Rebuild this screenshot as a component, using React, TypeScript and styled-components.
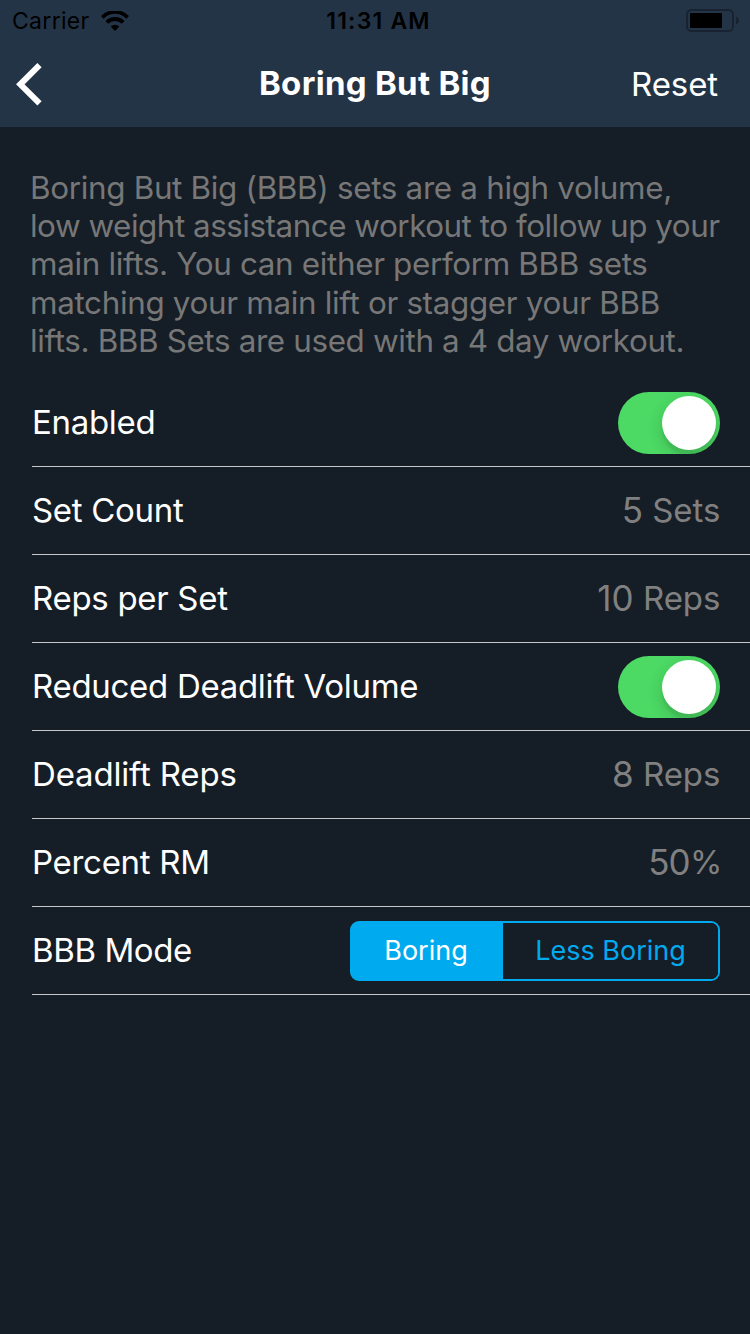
import React, { useState } from "react";
import styled, { createGlobalStyle } from "styled-components";

const GlobalStyle = createGlobalStyle`
  * { box-sizing: border-box; }
  body {
    margin: 0;
    background: #151d26;
    color: #ffffff;
    font-family: Inter, "Liberation Sans", sans-serif;
  }
  button { font: inherit; color: inherit; border: 0; padding: 0; background: none; cursor: pointer; }
`;

const Screen = styled.main`
  width: 750px;
  height: 1334px;
  overflow: hidden;
  background: #151d26;
`;

const Header = styled.header`
  height: 127px;
  background: #243447;
`;

const StatusBar = styled.div`
  display: grid;
  grid-template-columns: 1fr auto 1fr;
  align-items: center;
  height: 41px;
  padding: 0 11px 0 12px;
  color: #000000;
`;

const Carrier = styled.div`
  display: flex;
  align-items: center;
  gap: 11px;
  padding-top: 1px;
  font-size: 23px;
  line-height: 40px;
  letter-spacing: 0.3px;
`;

const Clock = styled.div`
  padding: 1px 0 0 6px;
  font-size: 23px;
  font-weight: 600;
  line-height: 40px;
  letter-spacing: 1.2px;
`;

const BatteryIcon = styled.svg`
  justify-self: end;
`;

const NavBar = styled.nav`
  display: grid;
  grid-template-columns: 1fr auto 1fr;
  align-items: center;
  height: 86px;
`;

const BackButton = styled.button`
  display: flex;
  justify-self: start;
  margin-left: 16px;
`;

const Title = styled.h1`
  margin: 0;
  padding-bottom: 3px;
  font-size: 33px;
  font-weight: 700;
  line-height: 40px;
  letter-spacing: 0.3px;
`;

const ResetButton = styled.button`
  justify-self: end;
  margin-right: 32px;
  padding-bottom: 1px;
  font-size: 33px;
  line-height: 40px;
  letter-spacing: -0.1px;
`;

const Description = styled.p`
  margin: 0;
  padding: 42px 0 19px 30px;
  color: #777777;
  font-size: 31.4px;
  line-height: 38.2px;
  white-space: nowrap;
`;

const DescriptionLine = styled.span<{ $tracking: number }>`
  display: block;
  letter-spacing: ${({ $tracking }) => $tracking}px;
`;

const Row = styled.div`
  display: flex;
  align-items: center;
  justify-content: space-between;
  height: 88px;
  margin-left: 32px;
  padding-right: 30px;
  border-bottom: 1px solid #c8c7cc;
`;

const Label = styled.span<{ $tracking?: number }>`
  padding-bottom: 2px;
  font-size: 33px;
  line-height: 40px;
  letter-spacing: ${({ $tracking = -0.3 }) => $tracking}px;
`;

const Value = styled.span`
  display: flex;
  align-items: center;
  margin-right: -0.5px;
  padding-bottom: 1px;
  color: #808080;
  font-size: 33px;
  line-height: 40px;
  white-space: pre;
`;

const Amount = styled.span`
  font-size: 35px;
`;

const Percentage = styled(Value)`
  margin-right: -1.5px;
  letter-spacing: -0.8px;
`;

const Switch = styled.button<{ $on: boolean }>`
  display: flex;
  justify-content: ${({ $on }) => ($on ? "flex-end" : "flex-start")};
  width: 102px;
  height: 62px;
  padding: 4px;
  border-radius: 31px;
  overflow: hidden;
  background: ${({ $on }) => ($on ? "#4cd964" : "#39424d")};
`;

const Knob = styled.span`
  width: 54px;
  height: 54px;
  border-radius: 50%;
  background: #ffffff;
  box-shadow: 0 6px 16px rgba(0, 0, 0, 0.16), 0 6px 2px rgba(0, 0, 0, 0.05);
`;

const Segments = styled.div`
  display: flex;
  width: 370px;
  height: 60px;
  border: 2px solid #00aaef;
  border-radius: 9px;
  overflow: hidden;
  background: linear-gradient(to right, #00aaef 8px, transparent 8px) border-box;
`;

const Segment = styled.button<{ $active: boolean; $width: number }>`
  width: ${({ $width }) => $width}px;
  padding-right: ${({ $width }) => ($width < 200 ? 3 : 0)}px;
  font-size: 27px;
  line-height: 56px;
  color: ${({ $active }) => ($active ? "#ffffff" : "#00aaef")};
  background: ${({ $active }) => ($active ? "#00aaef" : "#151d26")};
`;

const description = [
  { text: "Boring But Big (BBB) sets are a high volume,", tracking: -0.32 },
  { text: "low weight assistance workout to follow up your", tracking: -0.48 },
  { text: "main lifts. You can either perform BBB sets", tracking: -0.34 },
  { text: "matching your main lift or stagger your BBB", tracking: -0.33 },
  { text: "lifts. BBB Sets are used with a 4 day workout.", tracking: -0.36 },
];

function Toggle({ label }: { label: string }) {
  const [on, setOn] = useState(true);
  return (
    <Switch $on={on} role="switch" aria-checked={on} aria-label={label} onClick={() => setOn(!on)}>
      <Knob />
    </Switch>
  );
}

export default function App() {
  const [mode, setMode] = useState("Boring");
  return (
    <Screen>
      <GlobalStyle />
      <Header>
        <StatusBar>
          <Carrier>
            Carrier
            <svg width="28" height="20" viewBox="0 0 28 20" fill="none" stroke="#000">
              <path d="M1.3 6.300a17.800 17.800 0 0 1 25.400 0" strokeWidth="3.8" />
              <path d="M5.800 11.400a11.400 11.400 0 0 1 16.400 0" strokeWidth="4" />
              <path d="M14 20l-4.300-4.400a6.200 6.200 0 0 1 8.600 0z" fill="#000" stroke="none" />
            </svg>
          </Carrier>
          <Clock>11:31 AM</Clock>
          <BatteryIcon width="53" height="23" viewBox="0 0 53 23">
            <rect x="1" y="1" width="46" height="21" rx="4.5" fill="none" stroke="#192230" strokeWidth="2" />
            <rect x="4" y="4" width="32" height="15" rx="1" fill="#000" />
            <path d="M50 7.500c4 1.500 4 6.500 0 8z" fill="#192230" />
          </BatteryIcon>
        </StatusBar>
        <NavBar>
          <BackButton aria-label="Back">
            <svg width="26" height="44" viewBox="0 0 26 44" fill="none" stroke="#fff" strokeWidth="6">
              <path d="M23.500 3.200L4.300 22.300L23.500 41.400" />
            </svg>
          </BackButton>
          <Title>Boring But Big</Title>
          <ResetButton>Reset</ResetButton>
        </NavBar>
      </Header>
      <Description>
        {description.map(({ text, tracking }) => (
          <DescriptionLine key={text} $tracking={tracking}>{text}</DescriptionLine>
        ))}
      </Description>
      <Row>
        <Label>Enabled</Label>
        <Toggle label="Enabled" />
      </Row>
      <Row>
        <Label>Set Count</Label>
        <Value><Amount>5</Amount> Sets</Value>
      </Row>
      <Row>
        <Label>Reps per Set</Label>
        <Value><Amount>10</Amount> Reps</Value>
      </Row>
      <Row>
        <Label>Reduced Deadlift Volume</Label>
        <Toggle label="Reduced Deadlift Volume" />
      </Row>
      <Row>
        <Label $tracking={-0.17}>Deadlift Reps</Label>
        <Value><Amount>8</Amount> Reps</Value>
      </Row>
      <Row>
        <Label>Percent RM</Label>
        <Percentage><Amount>50</Amount>%</Percentage>
      </Row>
      <Row>
        <Label $tracking={-0.4}>BBB Mode</Label>
        <Segments>
          <Segment $width={151} $active={mode === "Boring"} onClick={() => setMode("Boring")}>Boring</Segment>
          <Segment $width={215} $active={mode === "Less Boring"} onClick={() => setMode("Less Boring")}>Less Boring</Segment>
        </Segments>
      </Row>
    </Screen>
  );
}
